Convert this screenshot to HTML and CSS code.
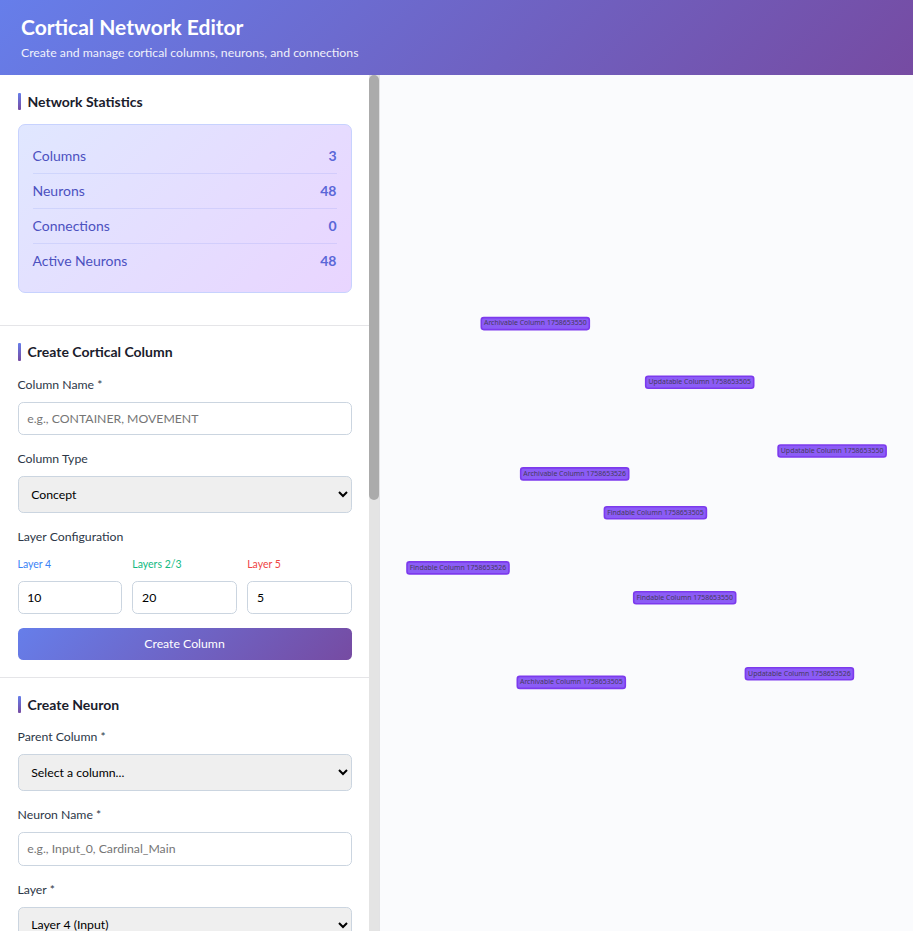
FILE: index.html
```html
<!DOCTYPE html>
<html lang="en">
<head>
<meta charset="utf-8">
<title>Cortical Network Editor</title>
<link rel="stylesheet" href="styles.css">
</head>
<body>
<header class="header">
  <h1>Cortical Network Editor</h1>
  <p>Create and manage cortical columns, neurons, and connections</p>
</header>
<div class="main">
  <aside class="sidebar">
    <div class="panel">
      <section class="section">
        <h2>Network Statistics</h2>
        <div class="stats">
          <div class="stat"><span>Columns</span><b>3</b></div>
          <div class="stat"><span>Neurons</span><b>48</b></div>
          <div class="stat"><span>Connections</span><b>0</b></div>
          <div class="stat"><span>Active Neurons</span><b>48</b></div>
        </div>
      </section>
      <section class="section">
        <h2>Create Cortical Column</h2>
        <div class="group"><label>Column Name *</label><input type="text" placeholder="e.g., CONTAINER, MOVEMENT"></div>
        <div class="group"><label>Column Type</label><select><option>Concept</option></select></div>
        <div class="group">
          <label>Layer Configuration</label>
          <div class="layers">
            <div><label class="small blue">Layer 4</label><input type="text" value="10"></div>
            <div><label class="small green">Layers 2/3</label><input type="text" value="20"></div>
            <div><label class="small red">Layer 5</label><input type="text" value="5"></div>
          </div>
        </div>
        <button class="btn">Create Column</button>
      </section>
      <section class="section">
        <h2>Create Neuron</h2>
        <div class="group"><label>Parent Column *</label><select><option>Select a column...</option></select></div>
        <div class="group"><label>Neuron Name *</label><input type="text" placeholder="e.g., Input_0, Cardinal_Main"></div>
        <div class="group"><label>Layer *</label><select><option>Layer 4 (Input)</option></select></div>
      </section>
    </div>
    <div class="scrollbar"><div class="thumb"></div></div>
  </aside>
  <main class="canvas">
    <svg width="533" height="856" viewBox="380 75 533 856">
      <g class="node"><rect x="481.3" y="317.6" width="108" height="12"/><text x="535.3" y="325.3">Archivable Column 1758653550</text></g>
      <g class="node"><rect x="645.7" y="376.3" width="108" height="12"/><text x="699.7" y="384">Updatable Column 1758653505</text></g>
      <g class="node"><rect x="778.1" y="445" width="108" height="12"/><text x="832.1" y="452.8">Updatable Column 1758653550</text></g>
      <g class="node"><rect x="520.7" y="467.9" width="108" height="12"/><text x="574.7" y="475.7">Archivable Column 1758653526</text></g>
      <g class="node"><rect x="604.4" y="506.8" width="102" height="12"/><text x="655.4" y="514.6">Findable Column 1758653505</text></g>
      <g class="node"><rect x="407" y="561.9" width="102" height="12"/><text x="458" y="569.6">Findable Column 1758653526</text></g>
      <g class="node"><rect x="633.7" y="591.8" width="102" height="12"/><text x="684.7" y="599.6">Findable Column 1758653550</text></g>
      <g class="node"><rect x="745.4" y="667.8" width="108" height="12"/><text x="799.4" y="675.6">Updatable Column 1758653526</text></g>
      <g class="node"><rect x="517.3" y="676.4" width="108" height="12"/><text x="571.3" y="684.1">Archivable Column 1758653505</text></g>
    </svg>
  </main>
</div>
</body>
</html>
```

FILE: styles.css
```css
* { box-sizing: border-box; margin: 0; padding: 0; }
html { font-size: 14px; }
body {
  height: 100vh;
  overflow: hidden;
  display: flex;
  flex-direction: column;
  font-family: Lato, sans-serif;
  line-height: 1.6;
  background: #fafbfd;
}
.header {
  height: 75.3px;
  flex: none;
  padding: 14px 21px;
  color: #fff;
  background: linear-gradient(135deg, #667eea 0%, #764ba2 100%);
}
.header h1 { font-size: 21px; font-weight: 700; line-height: 26px; margin-bottom: 3.5px; }
.header p { font-size: 12.25px; line-height: 18.4px; opacity: 0.9; }
.main { flex: 1; min-height: 0; display: flex; }
.sidebar {
  width: 380px;
  flex: none;
  display: flex;
  background: #fff;
  border-right: 1px solid #e2e2e4;
}
.panel { flex: 1; overflow: hidden; }
.scrollbar { width: 10px; background: #e4e4e4; }
.thumb { height: 425px; border-radius: 5px; background: #ababab; }
.section { padding: 17.5px; border-bottom: 1px solid #e5e5e8; }
h2 {
  display: flex;
  align-items: flex-start;
  gap: 7px;
  height: 17.5px;
  margin-bottom: 14px;
  font-size: 14px;
  line-height: 18.1px;
  font-weight: 700;
  color: #1a202c;
}
h2::before {
  content: "";
  width: 3px;
  height: 17.5px;
  border-radius: 1px;
  background: linear-gradient(180deg, #667eea, #764ba2);
}
.stats {
  padding: 14px;
  margin-bottom: 14px;
  border: 1px solid #c7d2fe;
  border-radius: 7px;
  background: linear-gradient(135deg, #e0e7ff 0%, #e9d5ff 100%);
}
.stat {
  display: flex;
  justify-content: space-between;
  height: 35px;
  padding: 5.6px 0;
  border-bottom: 1px solid rgba(102, 126, 234, 0.15);
  font-size: 14px;
  color: #4c51bf;
}
.stat:last-child { height: 34px; border-bottom: 0; }
.stat b { font-weight: 700; color: #5a67d8; }
.group { margin-bottom: 14px; }
label {
  display: block;
  margin-bottom: 7.35px;
  font-size: 12.25px;
  line-height: 19.6px;
  font-weight: 400;
  color: #2d3748;
}
input, select {
  display: block;
  width: 100%;
  border: 1px solid #cbd5e0;
  border-radius: 5.25px;
  padding: 8.75px;
  font-family: inherit;
  font-size: 12.25px;
  color: #000;
}
input { height: 33.5px; background: #fff; }
select { height: 37px; padding: 8.5px 8.75px 9px; background: #efefef; }
.layers { display: grid; grid-template-columns: repeat(3, minmax(0, 1fr)); gap: 10.5px; }
.small { font-size: 10.5px; line-height: 21px; margin-bottom: 5.6px; }
.blue { color: #3b82f6; }
.green { color: #10b981; }
.red { color: #ef4444; }
.btn {
  display: block;
  width: 100%;
  height: 31.5px;
  border: 0;
  border-radius: 5.25px;
  font-family: inherit;
  font-size: 12.25px;
  font-weight: 400;
  color: #fff;
  background: linear-gradient(135deg, #667eea 0%, #764ba2 100%);
}
.canvas { flex: 1; min-width: 0; background: #fafbfd; }
.canvas svg { display: block; }
.node rect { rx: 2.5px; fill: #8b5cf6; stroke: #7c3aed; stroke-width: 1.6px; }
.node text { font-family: "Noto Sans", sans-serif; font-size: 6.95px; text-anchor: middle; fill: #343434; opacity: 0.8; }
```
